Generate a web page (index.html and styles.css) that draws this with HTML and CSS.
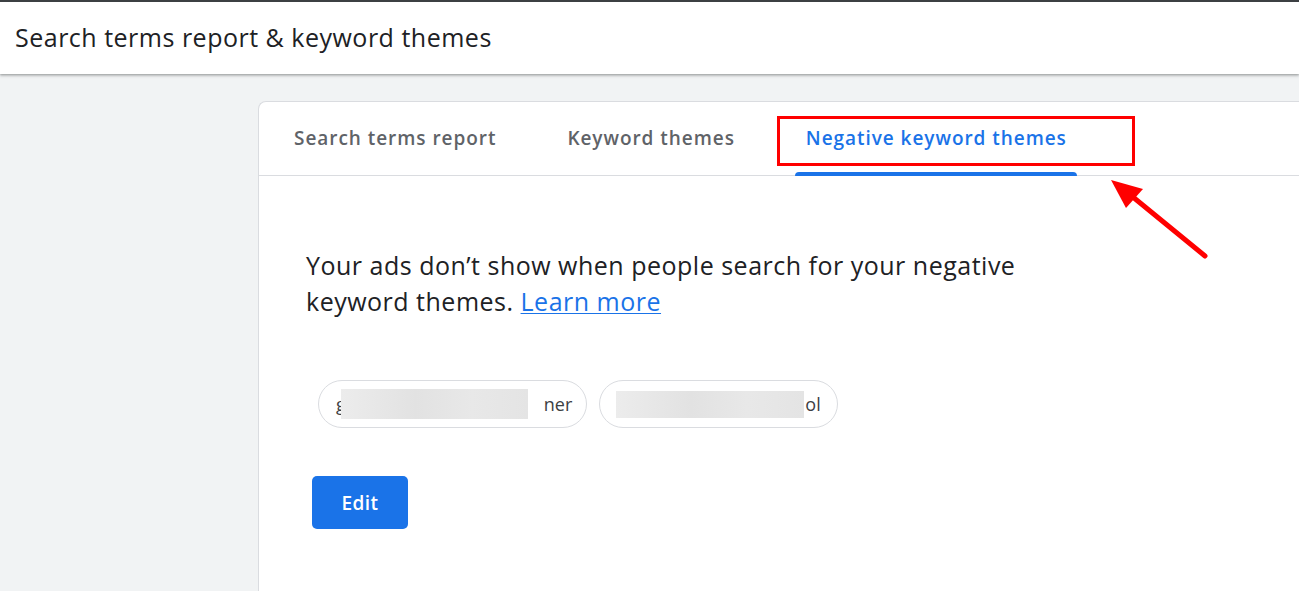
FILE: index.html
```html
<!DOCTYPE html>
<html>
<head>
<meta charset="utf-8">
<link rel="stylesheet" href="styles.css">
</head>
<body>
<header class="topbar">
  <h1 class="title">Search terms report &amp; keyword themes</h1>
</header>
<main class="page">
  <section class="card">
    <nav class="tabs">
      <div class="tab">Search terms report</div>
      <div class="tab">Keyword themes</div>
      <div class="tab active">Negative keyword themes</div>
    </nav>
    <div class="content">
      <p class="desc">Your ads don’t show when people search for your negative keyword themes. <a href="#" class="link">Learn more</a></p>
      <div class="chips">
        <div class="chip chip1">g<span class="blur b1"></span>ner</div>
        <div class="chip chip2"><span class="blur b2"></span>ol</div>
      </div>
      <button class="edit">Edit</button>
    </div>
  </section>
</main>
<div class="highlight"></div>
<svg class="arrow" width="120" height="100" viewBox="1100 170 120 100">
  <line x1="1205" y1="256" x2="1128" y2="193" stroke="#ff0000" stroke-width="5" stroke-linecap="round"/>
  <polygon points="1111,180 1143,189 1126,208" fill="#ff0000"/>
</svg>
</body>
</html>
```
FILE: styles.css
```css
html, body {
  margin: 0;
  padding: 0;
}
body {
  width: 1299px;
  height: 591px;
  overflow: hidden;
  background: #f1f3f4;
  font-family: "Open Sans", Roboto, Arial, sans-serif;
  color: #202124;
  position: relative;
}
.topbar {
  height: 74px;
  box-sizing: border-box;
  border-top: 2px solid #3c4043;
  padding-bottom: 2px;
  background: #fff;
  box-shadow: 0 1px 2px rgba(60,64,67,0.35), 0 2px 3px rgba(60,64,67,0.2);
  display: flex;
  align-items: center;
  position: relative;
  z-index: 1;
}
.title {
  margin: 0 0 0 15px;
  font-size: 25px;
  letter-spacing: 0.5px;
  font-weight: 400;
  color: #202124;
}
.page {
  padding: 27px 0 0 258px;
}
.card {
  background: #fff;
  border: 1px solid #dadce0;
  border-right: none;
  border-bottom: none;
  border-radius: 8px 0 0 0;
  height: 500px;
}
.tabs {
  display: flex;
  height: 73px;
  border-bottom: 1px solid #dadce0;
  padding-left: 35px;
}
.tab {
  font-size: 19px;
  letter-spacing: 0.95px;
  font-weight: 600;
  color: #5f6368;
  line-height: 73px;
  margin-right: 71px;
  position: relative;
}
.tab.active {
  color: #1a73e8;
}
.tab.active::after {
  content: "";
  position: absolute;
  left: -11px;
  right: -10px;
  bottom: -1px;
  height: 4px;
  background: #1a73e8;
  border-radius: 4px 4px 0 0;
}
.content {
  padding: 71px 0 0 47px;
}
.desc {
  margin: 0;
  width: 740px;
  font-size: 25px;
  letter-spacing: 0.5px;
  line-height: 36px;
  color: #202124;
}
.link {
  color: #1a73e8;
  text-decoration: underline;
  text-underline-offset: 2px;
  text-decoration-thickness: 1px;
}
.chips {
  display: flex;
  gap: 12px;
  margin: 61px 0 0 12px;
}
.chip {
  height: 46px;
  border: 1px solid #dadce0;
  border-radius: 24px;
  display: flex;
  align-items: center;
  font-size: 18px;
  font-weight: 500;
  color: #3c4043;
}
.chip1 {
  padding: 0 14px 0 17px;
}
.chip2 {
  padding: 0 16px 0 16px;
}
.blur {
  display: inline-block;
  height: 30px;
  background: linear-gradient(90deg, #ececec, #e2e2e2 40%, #e8e8e8 70%, #e4e4e4);
}
.b1 {
  width: 187px;
  margin-left: -5px;
  margin-right: 16px;
}
.b2 {
  width: 188px;
  margin-right: 1px;
  height: 27px;
}
.edit {
  margin: 48px 0 0 6px;
  width: 96px;
  height: 53px;
  background: #1a73e8;
  color: #fff;
  border: none;
  border-radius: 5px;
  font-family: "Open Sans", Roboto, Arial, sans-serif;
  font-size: 19px;
  font-weight: 600;
  letter-spacing: 0.5px;
  cursor: pointer;
}
.highlight {
  position: absolute;
  left: 777px;
  top: 116px;
  width: 352px;
  height: 44px;
  border: 3px solid #ff0000;
  z-index: 2;
}
.arrow {
  position: absolute;
  left: 1100px;
  top: 170px;
  z-index: 2;
}
```
